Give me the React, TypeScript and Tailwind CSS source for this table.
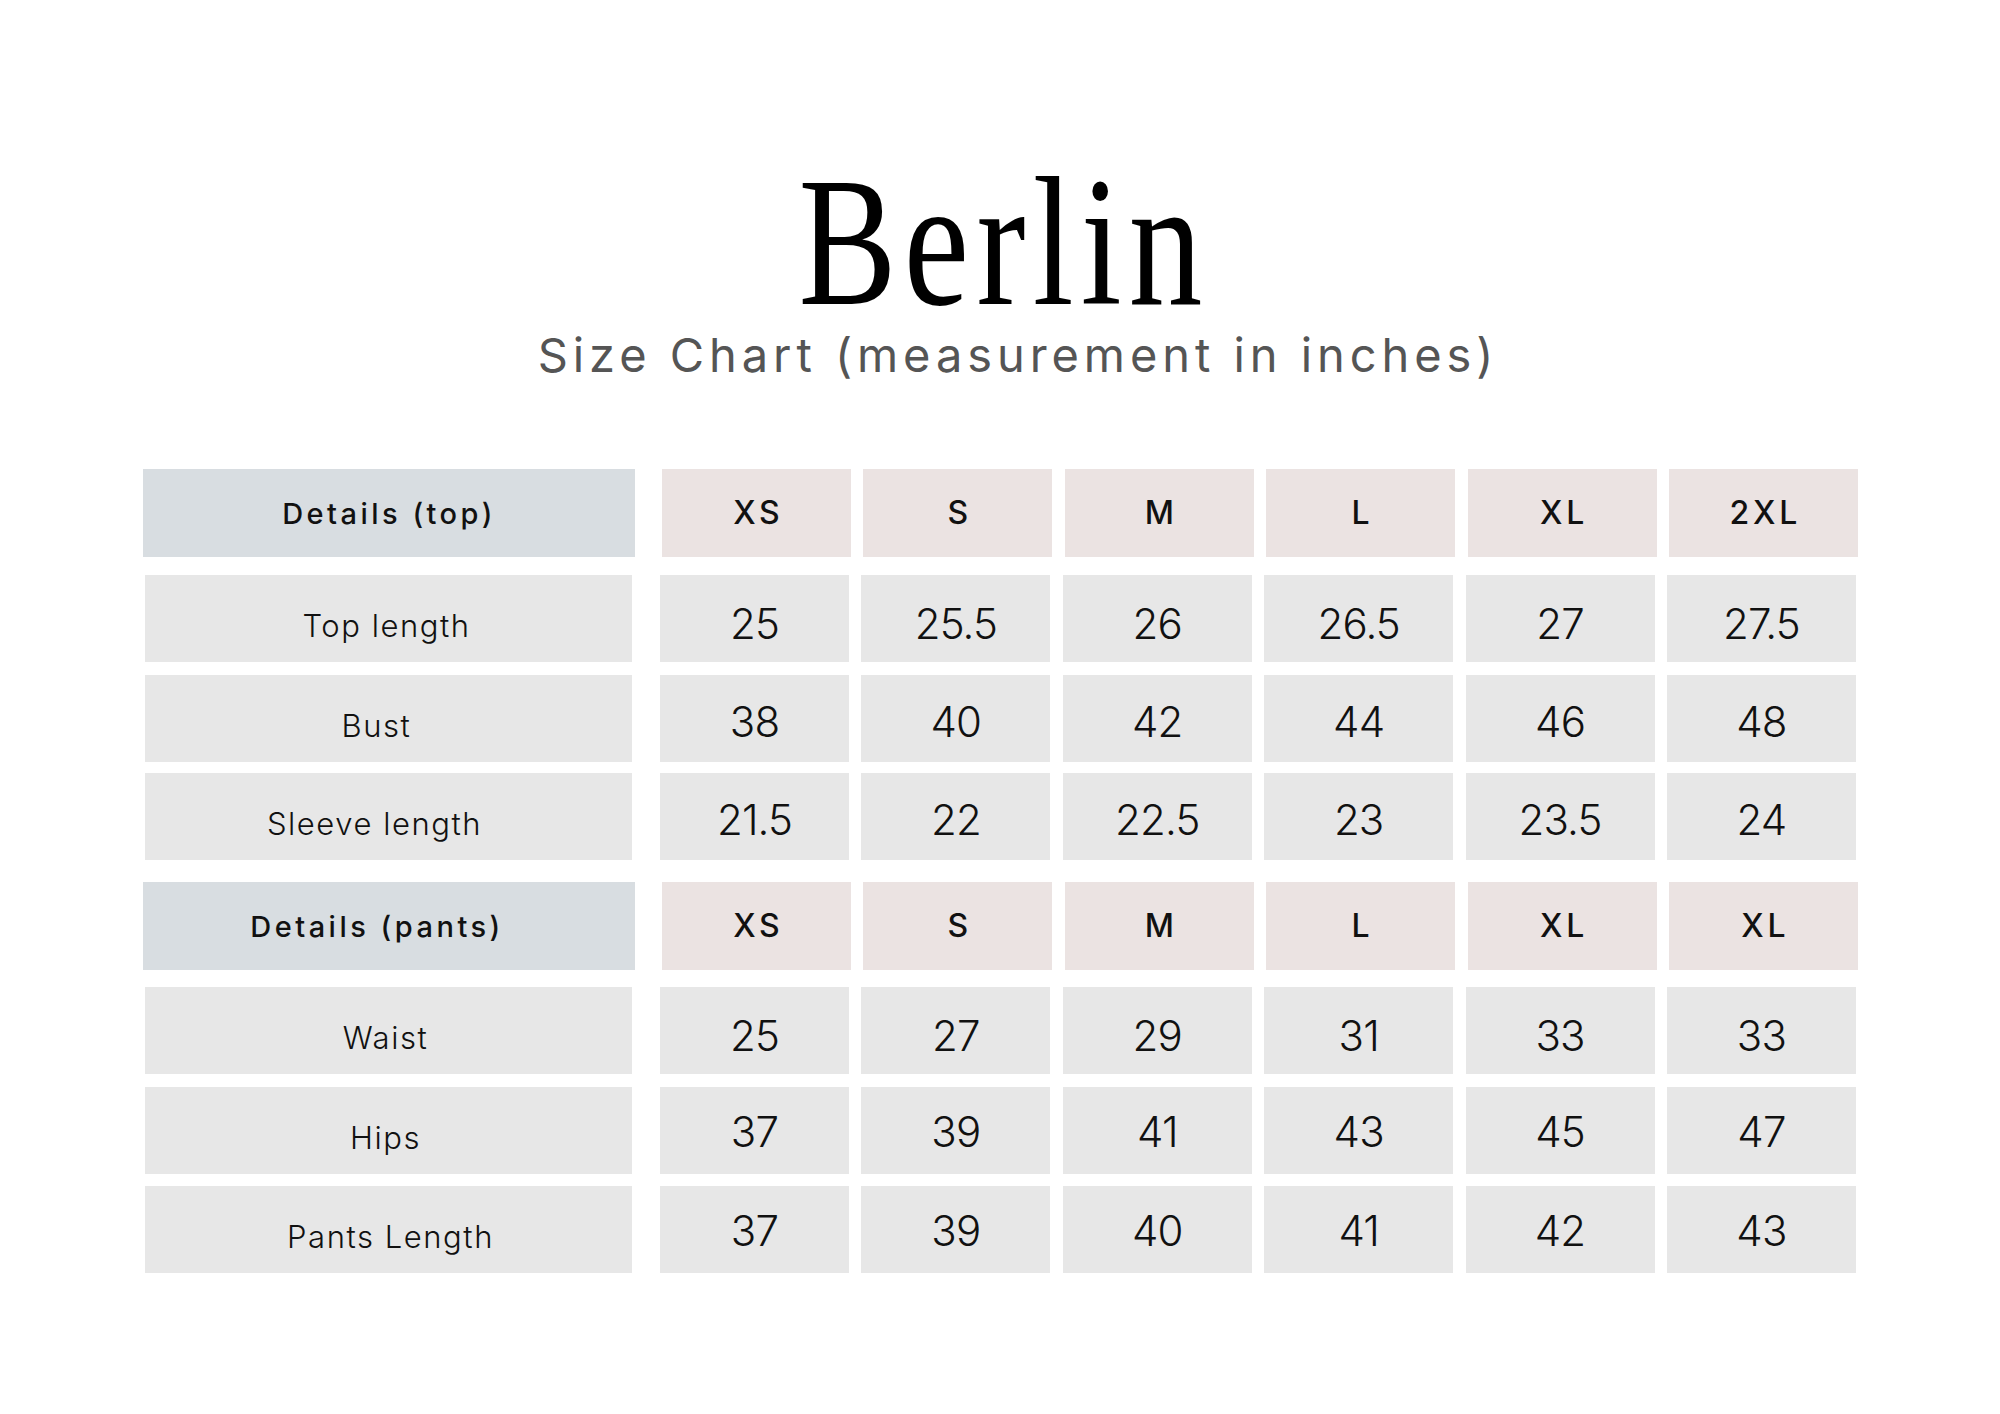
import React from "react";

const SIZES_TOP = ["XS", "S", "M", "L", "XL", "2XL"];
const SIZES_PANTS = ["XS", "S", "M", "L", "XL", "XL"];

type Row = { label: string; lx: string; values: string[]; mt: string; npt: string };

const TOP_ROWS: Row[] = [
  { label: "Top length", lx: "translate-x-[-2px]", values: ["25", "25.5", "26", "26.5", "27", "27.5"], mt: "mt-[18px]", npt: "pt-[10px]" },
  { label: "Bust", lx: "translate-x-[-12px]", values: ["38", "40", "42", "44", "46", "48"], mt: "mt-[13px]", npt: "pt-[6px]" },
  { label: "Sleeve length", lx: "translate-x-[-14px]", values: ["21.5", "22", "22.5", "23", "23.5", "24"], mt: "mt-[11px]", npt: "pt-[7px]" },
];

const PANTS_ROWS: Row[] = [
  { label: "Waist", lx: "translate-x-[-3px]", values: ["25", "27", "29", "31", "33", "33"], mt: "mt-[17px]", npt: "pt-[10px]" },
  { label: "Hips", lx: "translate-x-[-3px]", values: ["37", "39", "41", "43", "45", "47"], mt: "mt-[13px]", npt: "pt-[3px]" },
  { label: "Pants Length", lx: "translate-x-[2px]", values: ["37", "39", "40", "41", "42", "43"], mt: "mt-[12px]", npt: "pt-[3px]" },
];

const sans = "font-['Inter','Liberation_Sans',sans-serif]";

function HeaderRow({ title, tx, sizes, mt }: { title: string; tx: string; sizes: string[]; mt: string }) {
  return (
    <div className={`flex h-[88px] ${mt}`}>
      <div className="w-[492px] bg-[#d8dde1] flex items-center justify-center">
        <span className={`${sans} ${tx} text-[29px] font-medium tracking-[0.12em] text-[#111] leading-none`}>{title}</span>
      </div>
      <div className="ml-[27px] grid grid-cols-[repeat(6,189px)] gap-x-[12.4px]">
        {sizes.map((s, i) => (
          <div key={i} className="bg-[#ebe3e2] flex items-center justify-center">
            <span className={`${sans} text-[32px] font-medium tracking-[0.12em] text-[#111] leading-none pl-[0.12em]`}>{s}</span>
          </div>
        ))}
      </div>
    </div>
  );
}

function DataRow({ row }: { row: Row }) {
  return (
    <div className={`flex h-[87px] ${row.mt}`}>
      <div className="ml-[2px] w-[487px] bg-[#e7e7e7] flex items-center justify-center pt-[14px]">
        <span className={`${sans} ${row.lx} text-[31px] font-light tracking-[0.05em] text-[#111] leading-none`}>{row.label}</span>
      </div>
      <div className="ml-[28px] grid grid-cols-[repeat(6,189px)] gap-x-[12.4px]">
        {row.values.map((v, i) => (
          <div key={i} className={`bg-[#e7e7e7] flex items-center justify-center ${row.npt}`}>
            <span className={`${sans} text-[42px] font-light text-[#111] leading-none tracking-[-0.02em]`}>{v}</span>
          </div>
        ))}
      </div>
    </div>
  );
}

export default function App() {
  return (
    <div className="w-[2000px] h-[1414px] bg-white flex flex-col items-center overflow-hidden">
      <h1 className="mt-[167px] h-[150px] font-['Liberation_Serif','Times_New_Roman',serif] text-[184px] leading-[150px] text-black font-normal">
        <span className="inline-block scale-x-[0.8] tracking-[9px] pl-[9px]">Berlin</span>
      </h1>
      <p className={`${sans} mt-[14px] pl-[36px] text-[47px] leading-[48px] tracking-[0.105em] text-[#555]`}>
        Size Chart (measurement in inches)
      </p>
      <div className="mt-[90px] self-start ml-[143px] flex flex-col">
        <HeaderRow title="Details (top)" tx="" sizes={SIZES_TOP} mt="" />
        {TOP_ROWS.map((r) => (
          <DataRow key={r.label} row={r} />
        ))}
        <HeaderRow title="Details (pants)" tx="translate-x-[-12px]" sizes={SIZES_PANTS} mt="mt-[22px]" />
        {PANTS_ROWS.map((r) => (
          <DataRow key={r.label} row={r} />
        ))}
      </div>
    </div>
  );
}
